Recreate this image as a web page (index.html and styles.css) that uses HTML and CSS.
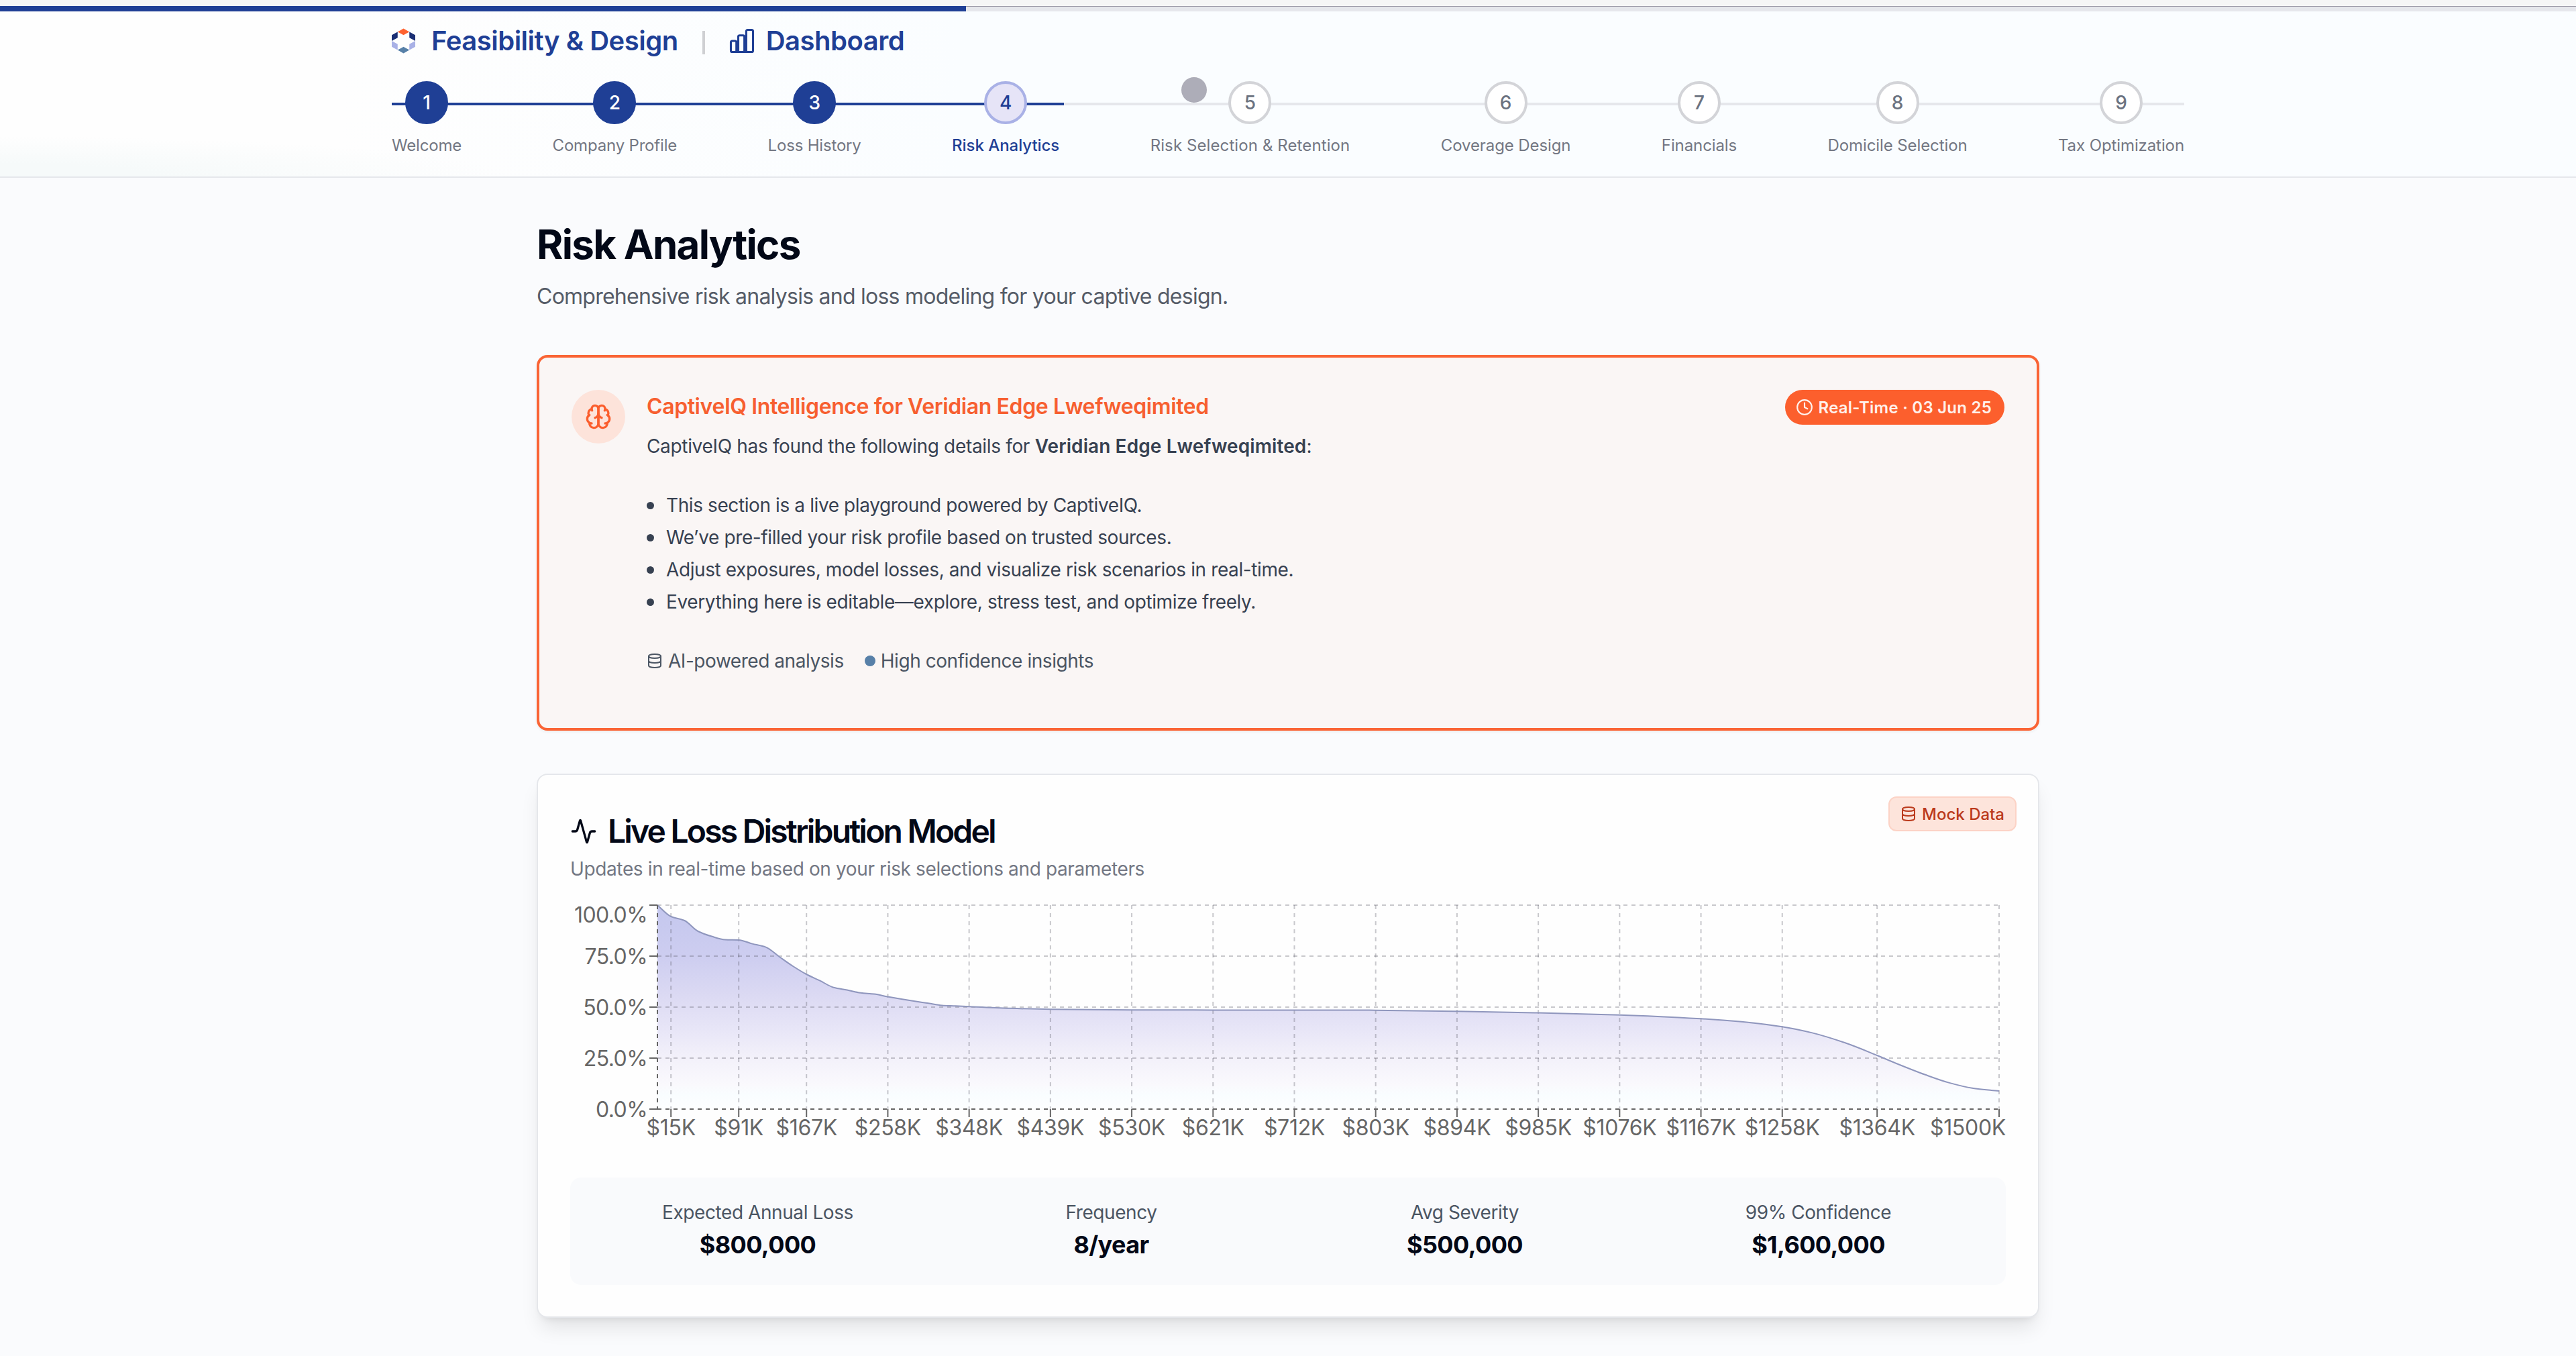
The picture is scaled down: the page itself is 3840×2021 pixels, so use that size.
FILE: index.html
```html
<!DOCTYPE html>
<html lang="en">
<head>
<meta charset="utf-8">
<title>Risk Analytics</title>
<link rel="stylesheet" href="styles.css">
</head>
<body>
<div class="window-edge"></div>
<div class="page-progress"><div class="page-progress-fill"></div></div>
<header class="header">
  <div class="header-inner">
    <nav class="brand-row">
      <a class="brand">
        <svg class="logo" viewBox="0 0 36 38"><path fill="#ff6230" d="M18 0l9 5-9 5-9-5z"/><path fill="#1b2f74" d="M0 10l9-5v9l-9 5zM36 10l-9-5v9l9 5z"/><path fill="#a9b1e6" d="M0 19l9 5v9l-9-5zM36 19l-9 5v9l9-5z"/><path fill="#5780a8" d="M18 28l9 5-9 5-9-5z"/></svg>
        <span>Feasibility &amp; Design</span>
      </a>
      <span class="brand-sep"></span>
      <a class="brand dash">
        <svg class="bars" viewBox="0 0 24 24" fill="none" stroke="currentColor" stroke-width="1.7" stroke-linecap="round" stroke-linejoin="round"><path d="M3 13.125C3 12.504 3.504 12 4.125 12h2.25c.621 0 1.125.504 1.125 1.125v6.75C7.5 20.496 6.996 21 6.375 21h-2.25A1.125 1.125 0 0 1 3 19.875v-6.75ZM9 8.625c0-.621.504-1.125 1.125-1.125h2.75c.621 0 1.125.504 1.125 1.125v11.25c0 .621-.504 1.125-1.125 1.125h-2.75a1.125 1.125 0 0 1-1.125-1.125V8.625ZM15.5 4.125c0-.621.504-1.125 1.125-1.125h3.25C20.496 3 21 3.504 21 4.125v15.75c0 .621-.504 1.125-1.125 1.125h-3.25a1.125 1.125 0 0 1-1.125-1.125V4.125ZM6.8 21h3.6M13 21h3.6"/></svg>
        <span>Dashboard</span>
      </a>
    </nav>
    <div class="stepper">
      <div class="track"><div class="track-fill"></div></div>
      <ol class="steps">
        <li class="step done"><b>1</b><span>Welcome</span></li>
        <li class="step done"><b>2</b><span>Company Profile</span></li>
        <li class="step done"><b>3</b><span>Loss History</span></li>
        <li class="step current"><b>4</b><span>Risk Analytics</span></li>
        <li class="step next"><b>5</b><span>Risk Selection &amp; Retention</span></li>
        <li class="step"><b>6</b><span>Coverage Design</span></li>
        <li class="step"><b>7</b><span>Financials</span></li>
        <li class="step"><b>8</b><span>Domicile Selection</span></li>
        <li class="step"><b>9</b><span>Tax Optimization</span></li>
      </ol>
    </div>
  </div>
</header>
<div class="pointer"></div>
<main class="main">
  <h1 class="title">Risk Analytics</h1>
  <p class="subtitle">Comprehensive risk analysis and loss modeling for your captive design.</p>

  <section class="insight">
    <div class="insight-icon">
      <svg viewBox="0 0 24 24" fill="none" stroke="currentColor" stroke-width="2" stroke-linecap="round" stroke-linejoin="round"><path d="M12 5a3 3 0 1 0-5.997.125 4 4 0 0 0-2.526 5.77 4 4 0 0 0 .556 6.588A4 4 0 1 0 12 18Z"/><path d="M12 5a3 3 0 1 1 5.997.125 4 4 0 0 1 2.526 5.77 4 4 0 0 1-.556 6.588A4 4 0 1 1 12 18Z"/><path d="M15 13a4.5 4.5 0 0 1-3-4 4.5 4.5 0 0 1-3 4"/><path d="M17.599 6.5a3 3 0 0 0 .399-1.375M6.003 5.125A3 3 0 0 0 6.401 6.5M3.477 10.896a4 4 0 0 1 .585-.396M19.938 10.5a4 4 0 0 1 .585.396M6 18a4 4 0 0 1-1.967-.516M19.967 17.484A4 4 0 0 1 18 18"/></svg>
    </div>
    <div class="insight-body">
      <h2 class="insight-title">CaptiveIQ Intelligence for Veridian Edge Lwefweqimited</h2>
      <p class="insight-text">CaptiveIQ has found the following details for <strong>Veridian Edge Lwefweqimited</strong>:</p>
      <ul class="insight-list">
        <li>This section is a live playground powered by CaptiveIQ.</li>
        <li>We’ve pre-filled your risk profile based on trusted sources.</li>
        <li>Adjust exposures, model losses, and visualize risk scenarios in real-time.</li>
        <li>Everything here is editable—explore, stress test, and optimize freely.</li>
      </ul>
      <div class="insight-meta">
        <svg class="db" viewBox="0 0 24 24" fill="none" stroke="currentColor" stroke-width="2" stroke-linecap="round"><ellipse cx="12" cy="5" rx="9" ry="3"/><path d="M3 5v14a9 3 0 0 0 18 0V5M3 12a9 3 0 0 0 18 0"/></svg>
        <span>AI-powered analysis</span>
        <i class="dot"></i>
        <span>High confidence insights</span>
      </div>
    </div>
    <div class="live-badge">
      <svg viewBox="0 0 24 24" fill="none" stroke="currentColor" stroke-width="2" stroke-linecap="round" stroke-linejoin="round"><circle cx="12" cy="12" r="10"/><path d="M12 6v6l4 2"/></svg>
      <span>Real-Time · 03 Jun 25</span>
    </div>
  </section>

  <section class="card">
    <div class="mock-badge">
      <svg viewBox="0 0 24 24" fill="none" stroke="currentColor" stroke-width="2" stroke-linecap="round"><ellipse cx="12" cy="5" rx="9" ry="3"/><path d="M3 5v14a9 3 0 0 0 18 0V5M3 12a9 3 0 0 0 18 0"/></svg>
      <span>Mock Data</span>
    </div>
    <h2 class="card-title">
      <svg viewBox="0 0 24 24" fill="none" stroke="currentColor" stroke-width="2" stroke-linecap="round" stroke-linejoin="round"><path d="M22 12h-2.48a2 2 0 0 0-1.93 1.46l-2.35 8.36a.25.25 0 0 1-.48 0L9.24 2.18a.25.25 0 0 0-.48 0l-2.35 8.36A2 2 0 0 1 4.49 12H2"/></svg>
      <span>Live Loss Distribution Model</span>
    </h2>
    <p class="card-sub">Updates in real-time based on your risk selections and parameters</p>
    <svg class="chart" id="loss-chart" viewBox="0 0 2140 400"></svg>
    <dl class="stats">
      <div><dt>Expected Annual Loss</dt><dd>$800,000</dd></div>
      <div><dt>Frequency</dt><dd>8/year</dd></div>
      <div><dt>Avg Severity</dt><dd>$500,000</dd></div>
      <div><dt>99% Confidence</dt><dd>$1,600,000</dd></div>
    </dl>
  </section>
</main>
<script src="chart.js"></script>
</body>
</html>
```
FILE: styles.css
```css
* { box-sizing: border-box; margin: 0; padding: 0; }
body {
  width: 3840px;
  height: 2021px;
  overflow: hidden;
  background: #fafbfd;
  font-family: Inter, "Liberation Sans", sans-serif;
  color: #020817;
}
svg { display: block; flex: none; }
ul, ol { list-style: none; }

.window-edge { height: 10px; background: #f6f6f6; border-bottom: 1px solid #9b99a6; }
.page-progress { display: flex; height: 7px; background: #e6e7ec; }
.page-progress-fill { width: 37.5%; height: 8px; margin-top: -1px; background: #1f3f95; }

.header {
  height: 248px;
  border-bottom: 2px solid #e5e7ec;
  background:
    radial-gradient(ellipse 760px 60px at 0 100%, #f6fafa 30%, rgba(246, 250, 250, 0)),
    linear-gradient(90deg, #fefefe 500px, #fafdff 1440px);
}
.header-inner { width: 2672px; margin: 0 auto; padding-top: 20px; }
.brand-row { display: flex; align-items: center; height: 48px; }
.brand { display: flex; align-items: center; gap: 24px; font-size: 40px; font-weight: 600; line-height: 48px; letter-spacing: -.5px; color: #1f3f95; }
.logo { width: 35px; height: 38px; }
.brand-sep { width: 4px; height: 35px; margin: 4px 33px 0 36px; background: #cfd0d3; }
.dash { gap: 14px; }
.bars { width: 44px; height: 44px; }

.stepper { position: relative; margin-top: 36px; }
.track { position: absolute; top: 32px; left: 0; right: 0; height: 4px; background: #e5e7eb; }
.track-fill { width: 37.5%; height: 4px; background: #1f3f95; }
.steps { position: relative; display: flex; justify-content: space-between; }
.step { display: flex; flex-direction: column; align-items: center; gap: 16px; font-size: 24px; line-height: 32px; letter-spacing: -.1px; color: #737783; }
.step b {
  display: flex; align-items: center; justify-content: center;
  width: 64px; height: 64px; border-radius: 50%;
  border: 4px solid #d3d4d8; background: #fff;
  font-size: 28px; font-weight: 450; color: #6b7280;
}
.done { letter-spacing: -.18px; }
.done b { background: #1f3f95; border-color: #1f3f95; color: #fff; }
.current { color: #1f3f95; font-weight: 500; letter-spacing: -.05px; }
.current b { background: #e6e4f7; border-color: #a9b1e6; color: #1f3f95; }
.next { letter-spacing: .1px; }
.pointer { position: absolute; left: 1761px; top: 115px; width: 38px; height: 38px; border-radius: 50%; background: #adadb8; }

.main { width: 2240px; margin: 0 auto; padding-top: 63px; }
.title { font-size: 60px; font-weight: 700; line-height: 72px; letter-spacing: -1.7px; }
.subtitle { margin-top: 18px; font-size: 32px; line-height: 48px; letter-spacing: -.75px; color: #555b67; }

.insight {
  display: flex; align-items: flex-start; gap: 32px;
  height: 560px; margin-top: 63px; padding: 48px;
  border: 4px solid #fa6435; border-radius: 16px; background: #faf6f5;
  box-shadow: 0 2px 4px rgba(0, 0, 0, .05);
}
.insight-icon { display: flex; align-items: center; justify-content: center; width: 80px; height: 80px; border-radius: 50%; background: #fde3da; color: #fb5e2d; }
.insight-icon svg { width: 40px; height: 40px; }
.insight-body { flex: 1; color: #374151; font-size: 28px; letter-spacing: -.4px; }
.insight-title { padding-top: 1px; font-size: 32px; font-weight: 600; line-height: 48px; color: #f75f30; }
.insight-text { margin-top: 11px; line-height: 48px; letter-spacing: -.33px; }
.insight-text strong { font-weight: 600; letter-spacing: .1px; }
.insight-list { margin-top: 40px; line-height: 48px; }
.insight-list li { display: flex; align-items: center; gap: 18px; }
.insight-list li::before { content: ""; width: 11px; height: 11px; border-radius: 50%; background: #374151; }
.insight-meta { display: flex; align-items: center; margin-top: 40px; line-height: 48px; letter-spacing: -.45px; color: #4b5563; }
.db { width: 24px; height: 24px; margin-right: 8px; }
.dot { width: 16px; height: 16px; margin: 0 8px 0 31px; border-radius: 50%; background: #5780a8; }
.live-badge {
  display: flex; align-items: center; gap: 8px; height: 52px; padding: 0 19px 0 16px;
  border-radius: 26px; background: #fc5f2d; color: #fff0eb;
  font-size: 24px; font-weight: 600; letter-spacing: .24px;
}
.live-badge svg { width: 26px; height: 26px; }

.card {
  position: relative; height: 811px; margin-top: 64px; padding: 56px 48px 0;
  border: 2px solid #e5e7eb; border-radius: 16px; background: #fefefe;
  box-shadow: 0 20px 30px -6px rgba(0, 0, 0, .1), 0 8px 12px -8px rgba(0, 0, 0, .1);
}
.mock-badge {
  position: absolute; top: 32px; right: 32px;
  display: flex; align-items: center; gap: 8px; height: 52px; padding: 0 16px;
  border: 2px solid #fcd3c6; border-radius: 12px; background: #fde4db; color: #bb3a1c;
  font-size: 24px; font-weight: 500;
}
.mock-badge svg { width: 24px; height: 24px; }
.card-title { display: flex; align-items: center; gap: 16px; font-size: 48px; font-weight: 600; line-height: 56px; letter-spacing: -2.8px; }
.card-title svg { width: 40px; height: 40px; }
.card-sub { margin-top: 8px; font-size: 28px; line-height: 40px; letter-spacing: -.37px; color: #737783; }
.chart { width: 2140px; height: 400px; margin: 20px 0; overflow: visible; }
.chart text { font-size: 32px; fill: #666; }
.chart .y-label { letter-spacing: -.6px; }
.chart .x-label { letter-spacing: -.3px; }
.stats { display: grid; grid-template-columns: repeat(4, 1fr); gap: 32px; padding: 32px; height: 160px; border-radius: 16px; background: #f9fafc; text-align: center; }
.stats dt { font-size: 28px; line-height: 40px; letter-spacing: -.42px; color: #4b5563; }
.stats dd { font-size: 36px; line-height: 56px; font-weight: 700; letter-spacing: -.6px; }
```
FILE: chart.js
```js
// Exceedance curve: [x, y] in chart units; the plot spans 130..2130 by 14..318.
const LEFT = 130, RIGHT = 2130, TOP = 14, BOTTOM = 318, COUNT = 99;
const curve = [[130,14],[150.2,31],[170.4,37],[190.6,53],[210.8,60.5],[231,65.5],[251.2,66],[271.4,71.6],[291.6,76.6],[311.8,91],[332,105],[352,117],[372.4,126.7],[392.6,136.7],[412.8,140.5],[433,144.7],[453.2,146.6],[473.4,150.5],[493.6,154],[513.8,157.3],[534,160.3],[554.4,163.5],[574.6,164.3],[594.8,165.3],[655.4,167.8],[716,169.2],[837,170.2],[958,170.4],[1150,170.4],[1200,170.7],[1322,172.3],[1443,174.6],[1564.6,177.7],[1685,183.3],[1746,187.8],[1806.6,195.2],[1851.5,204.4],[1900.6,219.3],[1947.6,237.7],[1974,248.8],[2020,266.8],[2055,278.6],[2090,286.7],[2130,291]];
const ticks = [[1,'$15K'],[6,'$91K'],[11,'$167K'],[17,'$258K'],[23,'$348K'],[29,'$439K'],[35,'$530K'],[41,'$621K'],[47,'$712K'],[53,'$803K'],[59,'$894K'],[65,'$985K'],[71,'$1076K'],[77,'$1167K'],[83,'$1258K'],[90,'$1364K'],[99,'$1500K']];
const levels = [[0,'100.0%',40],[.25,'75.0%',101.5],[.5,'50.0%',177.5],[.75,'25.0%',253.5],[1,'0.0%',329.5]];
const shades = [[0,'#c4c7ee'],[.25,'#cdcdf0'],[.45,'#dcdaf3'],[.6,'#e7e5f7'],[.75,'#f3f1fa'],[.88,'#faf9fd'],[.93,'#f9fdff'],[1,'#fdfeff']];

// Monotone cubic interpolation
function smooth(p) {
  const n = p.length, s = [], m = [];
  for (let i = 0; i < n - 1; i++) s.push((p[i+1][1] - p[i][1]) / (p[i+1][0] - p[i][0]));
  for (let i = 0; i < n; i++) {
    if (i === 0) m.push(s[0]);
    else if (i === n - 1) m.push(s[n-2]);
    else if (s[i-1] * s[i] <= 0) m.push(0);
    else m.push(2 * s[i-1] * s[i] / (s[i-1] + s[i]));
  }
  let d = `M${p[0][0]},${p[0][1]}`;
  for (let i = 0; i < n - 1; i++) {
    const h = (p[i+1][0] - p[i][0]) / 3;
    d += `C${p[i][0]+h},${p[i][1]+m[i]*h},${p[i+1][0]-h},${p[i+1][1]-m[i+1]*h},${p[i+1][0]},${p[i+1][1]}`;
  }
  return d;
}
const x = i => LEFT + (RIGHT - LEFT) * i / COUNT;
const y = f => TOP + (BOTTOM - TOP) * f;
const line = (x1, y1, x2, y2, c, dash) => `<line x1="${x1}" y1="${y1}" x2="${x2}" y2="${y2}" stroke="${c}" stroke-width="2"${dash ? ' stroke-dasharray="6 6"' : ''}/>`;
const path = smooth(curve);
const grid = 'rgba(80,80,95,.31)';
let out = '<defs><linearGradient id="fade" x1="0" y1="0" x2="0" y2="1">' + shades.map(s => `<stop offset="${s[0]}" stop-color="${s[1]}"/>`).join('') + '</linearGradient></defs>';
out += `<path d="${path}L${RIGHT},${BOTTOM}L${LEFT},${BOTTOM}Z" fill="url(#fade)"/>`;
levels.forEach(l => out += line(LEFT, y(l[0]), RIGHT, y(l[0]), grid, 1));
ticks.forEach(t => out += line(x(t[0]), TOP, x(t[0]), BOTTOM, grid, 1));
out += `<path d="${path}" fill="none" stroke="#8f96bd" stroke-width="2"/>`;
out += line(LEFT, BOTTOM, RIGHT, BOTTOM, '#666', 1) + line(LEFT, TOP, LEFT, BOTTOM, '#666', 1);
levels.forEach(l => out += line(LEFT - 12, y(l[0]), LEFT, y(l[0]), '#666') + `<text class="y-label" x="115" y="${l[2]}" text-anchor="end">${l[1]}</text>`);
ticks.forEach((t, i) => out += line(x(t[0]), BOTTOM, x(t[0]), BOTTOM + 12, '#666') + `<text class="x-label" x="${i === 16 ? 2140 : x(t[0])}" y="357" text-anchor="${i === 16 ? 'end' : 'middle'}">${t[1]}</text>`);
document.getElementById('loss-chart').innerHTML = out;
```
